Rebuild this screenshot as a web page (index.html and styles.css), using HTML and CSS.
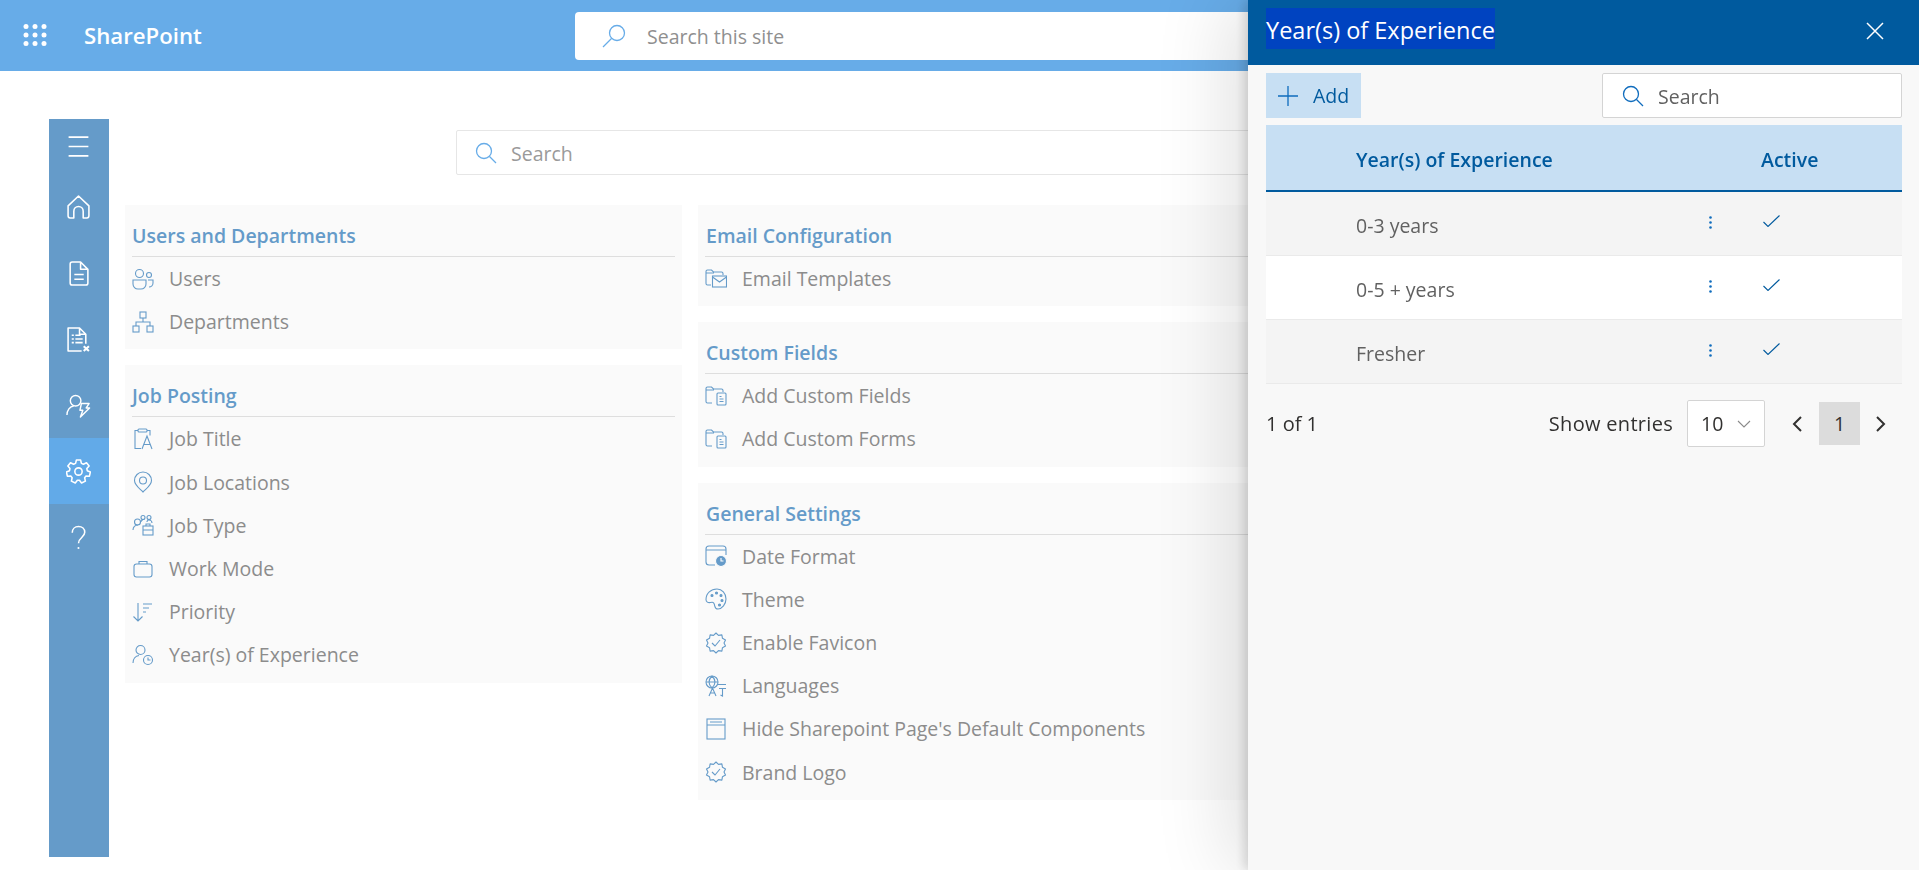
FILE: index.html
```html
<!DOCTYPE html>
<html lang="en">
<head>
    <meta charset="UTF-8">
    <title>Year(s) of Experience</title>
    <link rel="stylesheet" href="styles.css">
</head>
<body>
    <svg class="defs" width="0" height="0">
        <symbol id="badge" viewBox="0 0 22 22">
            <path d="M11 1L13.470 3.390 16.880 2.910 17.470 6.300 20.510 7.910 19 11 20.510 14.090 17.470 15.700 16.880 19.090 13.470 18.610 11 21 8.530 18.610 5.120 19.090 4.530 15.700 1.490 14.090 3 11 1.490 7.910 4.530 6.300 5.120 2.910 8.530 3.390z" fill="none" stroke="currentColor" stroke-width="1.100" stroke-linejoin="round"/>
            <path d="M7 11l3 3 5-6" fill="none" stroke="currentColor" stroke-width="1.100"/>
        </symbol>
        <symbol id="folder-doc" viewBox="0 0 22 22">
            <path d="M7 18H2.500A1.500 1.500 0 0 1 1 16.500V3.500A1.500 1.500 0 0 1 2.500 2h4l2 2h8A1.500 1.500 0 0 1 18 5.500V7M1 5h8" fill="none" stroke="currentColor" stroke-width="1.100"/>
            <rect x="12" y="8" width="9" height="12" rx="1" fill="#fafafa" stroke="currentColor" stroke-width="1.100"/>
            <path d="M14.500 11.500h2M14.500 14h4M14.500 16.500h4" fill="none" stroke="currentColor"/>
        </symbol>
        <symbol id="check" viewBox="0 0 17 12">
            <path d="M.5 7l4.500 4.500L16.500.5" fill="none" stroke="currentColor" stroke-width="1.100"/>
        </symbol>
        <symbol id="kebab" viewBox="0 0 3 13">
            <circle cx="1.500" cy="1.500" r="1.300" fill="currentColor"/>
            <circle cx="1.500" cy="6.500" r="1.300" fill="currentColor"/>
            <circle cx="1.500" cy="11.500" r="1.300" fill="currentColor"/>
        </symbol>
    </svg>

    <div class="top-bar">
        <svg class="waffle" viewBox="0 0 24 22">
            <circle cx="3" cy="2.500" r="2.500"/><circle cx="12" cy="2.500" r="2.500"/><circle cx="21" cy="2.500" r="2.500"/>
            <circle cx="3" cy="11" r="2.500"/><circle cx="12" cy="11" r="2.500"/><circle cx="21" cy="11" r="2.500"/>
            <circle cx="3" cy="19.500" r="2.500"/><circle cx="12" cy="19.500" r="2.500"/><circle cx="21" cy="19.500" r="2.500"/>
        </svg>
        <span class="brand">SharePoint</span>
        <div class="site-search">
            <svg class="site-search-icon" viewBox="0 0 24 24">
                <circle cx="15" cy="9" r="7.500"/>
                <path d="M9.500 14.500L1 23"/>
            </svg>
            <span class="nudge">Search this site</span>
        </div>
    </div>

    <div class="page">
        <div class="side-nav">
            <div class="nav-item nav-toggle">
                <svg class="nav-icon" viewBox="0 0 24 24"><path d="M2.500 3h19M2.500 12h19M2.500 21h19"/></svg>
            </div>
            <div class="nav-item">
                <svg class="nav-icon" viewBox="0 0 24 24"><path d="M2 20V10.500L12 1l10 9.500V20a2 2 0 0 1-2 2h-3.500v-6.500a4.500 4.500 0 0 0-9 0V22H4a2 2 0 0 1-2-2z"/></svg>
            </div>
            <div class="nav-item">
                <svg class="nav-icon" viewBox="0 0 24 24"><path d="M4 3a2 2 0 0 1 2-2h8l7 7v13a2 2 0 0 1-2 2H6a2 2 0 0 1-2-2zM14 1v7h7M8 13h9M8 17.500h9"/></svg>
            </div>
            <div class="nav-item">
                <svg class="nav-icon" viewBox="0 0 24 24"><path d="M19 16V7l-6-6H2v22h13M13 1v6h6M5.500 8h2M9 8h5M5.500 11.500h2M9 11.500h7M5.500 15h2M9 15h7"/><path class="nav-x" d="M17 18.500l5 4.500M22 18.500l-5 4.500"/></svg>
            </div>
            <div class="nav-item">
                <svg class="nav-icon" viewBox="0 0 26 24"><circle cx="10" cy="7" r="5.500"/><path d="M1 22c0-5 3-9 7-9.500"/><path d="M16 10h8l-3 4.500h3.500L15 24l2.500-7h-3z"/></svg>
            </div>
            <div class="nav-item nav-active">
                <svg class="nav-icon" viewBox="0 0 24 24"><circle cx="12" cy="12" r="3.500"/><path d="M10 1h4l.8 3.200 1.900.9 3-1.500 2.500 3.200-2.200 2.400.4 2 3 1.300-.9 4-3.300-.1-1.300 1.600.7 3.200-3.700 1.800-2-2.600h-2l-2 2.600-3.700-1.800.7-3.200-1.300-1.600-3.300.1-.9-4 3-1.300.4-2L1.800 6.800l2.500-3.200 3 1.500 1.900-.9z"/></svg>
            </div>
            <div class="nav-item">
                <svg class="nav-icon" viewBox="0 0 24 24"><path d="M6 7.500C6 4 8.500 1.500 12 1.500s6 2.300 6 5.500c0 5-6 5-6 10.500"/><circle class="nav-dot" cx="12" cy="22" r="1"/></svg>
            </div>
        </div>

        <div class="content">
            <div class="main-search">
                <svg class="search-icon" viewBox="0 0 22 22"><circle cx="9" cy="9" r="7.500"/><path d="M14.500 14.500L21 21"/></svg>
                <span class="nudge">Search</span>
            </div>

            <div class="columns">
                <div class="column">
                    <div class="card">
                        <div class="card-title">Users and Departments</div>
                        <div class="card-row">
                            <svg class="row-icon" viewBox="0 0 22 22"><circle cx="7.500" cy="5.500" r="4"/><circle cx="17" cy="7" r="2.500"/><path d="M1 12h13v4a5 5 0 0 1-5 5H6a5 5 0 0 1-5-5zM16 12h5v3a4 4 0 0 1-4 4"/></svg>
                            <span>Users</span>
                        </div>
                        <div class="card-row">
                            <svg class="row-icon" viewBox="0 0 22 22"><rect x="8" y="1" width="6" height="6"/><rect x="1" y="15" width="6" height="6"/><rect x="15" y="15" width="6" height="6"/><path d="M11 7v4M4 15v-4h14v4"/></svg>
                            <span>Departments</span>
                        </div>
                    </div>
                    <div class="card">
                        <div class="card-title">Job Posting</div>
                        <div class="card-row">
                            <svg class="row-icon" viewBox="0 0 22 22"><path d="M6 2.500H3v18h6M15 2.500h3v5"/><rect x="6" y="1" width="9" height="3" rx="1"/><path d="M10 21l5-13 5 13M12 16.500h6"/></svg>
                            <span>Job Title</span>
                        </div>
                        <div class="card-row">
                            <svg class="row-icon" viewBox="0 0 22 22"><path d="M11 21C7 17 2.500 14 2.500 9.500a8.500 8.500 0 0 1 17 0C19.500 14 15 17 11 21z"/><circle cx="11" cy="9.500" r="3.500"/></svg>
                            <span>Job Locations</span>
                        </div>
                        <div class="card-row">
                            <svg class="row-icon" viewBox="0 0 22 22"><circle cx="5.500" cy="8" r="3"/><circle cx="11" cy="3.500" r="2"/><circle cx="17" cy="3.500" r="2"/><path d="M1 16c0-3 2-5 5-5M9 8c0-1 1-2 2-2M15 8c0-1 1-2 2-2s3 1 3 3"/><rect x="11" y="12" width="10" height="9"/><path d="M14 12v-2h4v2M11 16h10"/></svg>
                            <span>Job Type</span>
                        </div>
                        <div class="card-row">
                            <svg class="row-icon" viewBox="0 0 22 22"><rect x="2" y="6" width="18" height="13" rx="2.500"/><path d="M7 6V3.500h8V6"/></svg>
                            <span>Work Mode</span>
                        </div>
                        <div class="card-row">
                            <svg class="row-icon" viewBox="0 0 22 22"><path d="M6 2v18M1.500 15.500L6 20l4.500-4.500M11 3h9M11 7h6M11 11h3"/></svg>
                            <span>Priority</span>
                        </div>
                        <div class="card-row">
                            <svg class="row-icon" viewBox="0 0 22 22"><circle cx="8.500" cy="6" r="4.500"/><path d="M1 19c0-4 2.500-7 6-7.500"/><circle cx="16" cy="16" r="4.500"/><path d="M16 13.500V16h2.500"/></svg>
                            <span>Year(s) of Experience</span>
                        </div>
                    </div>
                </div>

                <div class="column">
                    <div class="card">
                        <div class="card-title">Email Configuration</div>
                        <div class="card-row">
                            <svg class="row-icon" viewBox="0 0 22 22"><path d="M6 17H2.500A1.500 1.500 0 0 1 1 15.500V3.500A1.500 1.500 0 0 1 2.500 2h4l2 2h8A1.500 1.500 0 0 1 18 5.500V7M1 5h8"/><rect x="7.500" y="8" width="14" height="11"/><path d="M7.500 9l7 5 7-5"/></svg>
                            <span>Email Templates</span>
                        </div>
                    </div>
                    <div class="card">
                        <div class="card-title">Custom Fields</div>
                        <div class="card-row">
                            <svg class="row-sym"><use href="#folder-doc"/></svg>
                            <span>Add Custom Fields</span>
                        </div>
                        <div class="card-row">
                            <svg class="row-sym"><use href="#folder-doc"/></svg>
                            <span>Add Custom Forms</span>
                        </div>
                    </div>
                    <div class="card">
                        <div class="card-title">General Settings</div>
                        <div class="card-row">
                            <svg class="row-icon" viewBox="0 0 22 22"><path d="M10 20H4a3 3 0 0 1-3-3V4a3 3 0 0 1 3-3h14a3 3 0 0 1 3 3v6M1 5h20"/><circle class="icon-fill" cx="16" cy="16" r="5.500"/><path class="icon-hand" d="M16 13v3h2.500"/></svg>
                            <span>Date Format</span>
                        </div>
                        <div class="card-row">
                            <svg class="row-icon" viewBox="0 0 22 22"><path d="M12 1c5 0 9 4.500 9 10 0 5-4 10-8 10-3 0-3-2-3.500-4-.5-3-2-3-4-2.500C3 15 1 14 1 11.500 1 5 6 1 12 1z"/><circle cx="7" cy="7.500" r="1"/><circle cx="11.500" cy="5" r="1"/><circle cx="16" cy="7.500" r="1"/><circle cx="17" cy="12.500" r="1"/><circle cx="14.500" cy="17" r="1"/></svg>
                            <span>Theme</span>
                        </div>
                        <div class="card-row">
                            <svg class="row-sym"><use href="#badge"/></svg>
                            <span>Enable Favicon</span>
                        </div>
                        <div class="card-row">
                            <svg class="row-icon" viewBox="0 0 22 22"><circle cx="7" cy="7" r="6"/><path d="M1 7h12M7 1c-4 4-4 8 0 12M7 1c4 4 4 8 0 12M4 21l3.500-8 3.500 8M5.500 18h4M13 9.500h8M14 13.500h7M17.500 13.500V21l-2-1"/></svg>
                            <span>Languages</span>
                        </div>
                        <div class="card-row">
                            <svg class="row-icon" viewBox="0 0 22 22"><rect x="2" y="1" width="18" height="20"/><path d="M2 7h18M5 4h12"/></svg>
                            <span>Hide Sharepoint Page's Default Components</span>
                        </div>
                        <div class="card-row">
                            <svg class="row-sym"><use href="#badge"/></svg>
                            <span>Brand Logo</span>
                        </div>
                    </div>
                </div>
            </div>
        </div>
    </div>

    <!-- Side panel, lies over the page -->
    <div class="panel">
        <div class="panel-header">
            <span class="panel-title">Year(s) of Experience</span>
            <svg class="panel-close" viewBox="0 0 18 18"><path d="M1 1l16 16M17 1L1 17"/></svg>
        </div>
        <div class="panel-body">
            <div class="toolbar">
                <div class="add-btn">
                    <svg class="add-icon" viewBox="0 0 20 20"><path d="M10 0v20M0 10h20"/></svg>
                    <span>Add</span>
                </div>
                <div class="panel-search">
                    <svg class="panel-search-icon" viewBox="0 0 22 22"><circle cx="9" cy="9" r="7.500"/><path d="M14.500 14.500L21 21"/></svg>
                    <span class="nudge">Search</span>
                </div>
            </div>

            <div class="table-head">
                <span></span>
                <span>Year(s) of Experience</span>
                <span></span>
                <span>Active</span>
            </div>
            <div class="table-row">
                <span></span>
                <span class="row-text">0-3 years</span>
                <svg class="kebab"><use href="#kebab"/></svg>
                <svg class="check"><use href="#check"/></svg>
            </div>
            <div class="table-row">
                <span></span>
                <span class="row-text">0-5 + years</span>
                <svg class="kebab"><use href="#kebab"/></svg>
                <svg class="check"><use href="#check"/></svg>
            </div>
            <div class="table-row">
                <span></span>
                <span class="row-text">Fresher</span>
                <svg class="kebab"><use href="#kebab"/></svg>
                <svg class="check"><use href="#check"/></svg>
            </div>

            <div class="table-foot">
                <span class="foot-count">1 of 1</span>
                <span class="foot-label">Show entries</span>
                <div class="entries-select">
                    <span>10</span>
                    <svg class="select-chevron" viewBox="0 0 14 8"><path d="M1 1l6 6 6-6"/></svg>
                </div>
                <svg class="pager-arrow pager-prev" viewBox="0 0 10 16"><path d="M9 1L2 8l7 7"/></svg>
                <span class="pager-page">1</span>
                <svg class="pager-arrow pager-next" viewBox="0 0 10 16"><path d="M1 1l7 7-7 7"/></svg>
            </div>
        </div>
    </div>
</body>
</html>
```

FILE: styles.css
```css
* {
    margin: 0;
    padding: 0;
    box-sizing: border-box;
}

html, body {
    height: 100%;
    overflow: hidden;
    background-color: #fff;
    font-family: "Open Sans", "Noto Sans", sans-serif;
}

.defs {
    position: absolute;
}

/* Search placeholders sit a little low in their boxes */
.nudge {
    padding-top: 2px;
}

/* Top bar */
.top-bar {
    height: 71px;
    background-color: #67ace8;
    display: flex;
    align-items: center;
    padding-left: 23px;
}

.waffle {
    width: 24px;
    height: 22px;
    fill: #fff;
    margin-top: -2px;
}

.brand {
    width: 491px;
    margin-left: 37px;
    color: #fff;
    font-size: 22.200px;
    font-weight: 600;
}

.site-search {
    width: 800px;
    height: 48px;
    background-color: #fff;
    border-radius: 4px;
    display: flex;
    align-items: center;
    padding-left: 27px;
    color: #8f8f8f;
    font-size: 19.500px;
}

.site-search-icon {
    width: 24px;
    height: 24px;
    margin-right: 21px;
    fill: none;
    stroke: #67ace8;
    stroke-width: 1.300;
}

/* Page */
.page {
    display: flex;
    padding: 48px 0 0 49px;
}

.side-nav {
    width: 60px;
    height: 738px;
    background-color: #659bc9;
}

.nav-item {
    height: 66px;
    display: flex;
    align-items: center;
    justify-content: center;
    padding-right: 2px;
}

.nav-toggle {
    height: 55px;
}

.nav-active {
    background-color: #62aae8;
}

.nav-icon {
    width: 25px;
    height: 25px;
    fill: none;
    stroke: #fff;
    stroke-width: 1.500;
    stroke-linejoin: round;
}

.nav-x {
    stroke-width: 2;
}

.nav-dot {
    fill: #fff;
    stroke: none;
}

.content {
    flex: 1;
    padding-left: 16px;
}

.main-search {
    margin: 11px 0 0 331px;
    width: 900px;
    height: 45px;
    border: 1px solid #e6e6e6;
    border-radius: 2px;
    display: flex;
    align-items: center;
    padding-left: 18px;
    color: #9a9a9a;
    font-size: 19.500px;
}

.search-icon {
    width: 22px;
    height: 22px;
    margin-right: 14px;
    fill: none;
    stroke: #67ace8;
    stroke-width: 1.300;
}

.columns {
    display: flex;
    gap: 16px;
    margin-top: 30px;
}

.column {
    width: 557px;
    display: flex;
    flex-direction: column;
    gap: 16px;
}

.column:last-child {
    width: 600px;
}

.column:last-child .card-title {
    line-height: 35px;
    padding-left: 1px;
}

.card {
    background-color: #fafafa;
    padding: 13px 7px 6px;
}

.card-title {
    height: 39px;
    line-height: 36px;
    border-bottom: 1px solid #dedede;
    color: #659bc9;
    font-size: 19.500px;
    font-weight: 600;
}

.card-row {
    height: 43.200px;
    display: flex;
    align-items: center;
    color: #8c8c8c;
    font-size: 19.500px;
}

.row-icon, .row-sym {
    width: 22px;
    height: 22px;
    margin-right: 15px;
    flex-shrink: 0;
    color: #659bc9;
}

.row-icon {
    fill: none;
    stroke: #659bc9;
    stroke-width: 1.100;
}

.row-icon circle[r="1"] {
    fill: #659bc9;
}

.icon-fill {
    fill: #659bc9;
    stroke: #fafafa;
}

.icon-hand {
    stroke: #fff;
}

/* Side panel */
.panel {
    position: fixed;
    top: 0;
    right: 0;
    bottom: 0;
    width: 671px;
    background-color: #f8f8f8;
    box-shadow: -4px 0 10px rgba(0, 0, 0, 0.14), -20px 0 70px rgba(0, 0, 0, 0.12);
}

.panel-header {
    height: 65px;
    background-color: #005a9e;
    display: flex;
    justify-content: space-between;
    padding: 8px 35px 0 18px;
}

.panel-title {
    height: 41px;
    line-height: 44px;
    background-color: #0043c0;
    color: #fff;
    font-size: 23.500px;
}

.panel-close {
    width: 18px;
    height: 18px;
    margin-top: 14px;
    fill: none;
    stroke: #fff;
    stroke-width: 1.500;
}

.panel-body {
    padding: 8px 17px 0 18px;
}

.toolbar {
    display: flex;
    justify-content: space-between;
    margin-bottom: 7px;
}

.add-btn {
    width: 95px;
    height: 45px;
    background-color: #c7dff3;
    display: flex;
    align-items: center;
    padding-left: 12px;
    color: #005a9e;
    font-size: 19.500px;
    line-height: 40px;
}

.add-icon {
    width: 20px;
    height: 20px;
    margin-right: 15px;
    fill: none;
    stroke: #0f6cbd;
    stroke-width: 1.300;
}

.panel-search {
    width: 300px;
    height: 45px;
    background-color: #fff;
    border: 1px solid #d4d4d4;
    border-radius: 2px;
    display: flex;
    align-items: center;
    padding-left: 19px;
    color: #616161;
    font-size: 19.500px;
}

.panel-search-icon {
    width: 22px;
    height: 22px;
    margin-right: 14px;
    fill: none;
    stroke: #0f6cbd;
    stroke-width: 1.300;
}

.table-head, .table-row {
    display: grid;
    grid-template-columns: 90px 1fr 32px 176px;
    align-items: center;
}

.table-head {
    height: 67px;
    padding-top: 3px;
    background-color: #c7dff3;
    border-bottom: 2px solid #005a9e;
    color: #005a9e;
    font-size: 19.500px;
    font-weight: 600;
}

.table-head span:last-child {
    margin-left: 35px;
}

.table-row {
    height: 64px;
    background-color: #f4f4f4;
    border-bottom: 1px solid #eaeaea;
    color: #616161;
    font-size: 19.500px;
}

.table-row:nth-child(even) {
    background-color: #fff;
}

.row-text {
    padding-top: 3px;
}

.kebab {
    width: 3px;
    height: 13px;
    justify-self: center;
    color: #0f6cbd;
    margin-top: -3px;
}

.check {
    width: 17px;
    height: 12px;
    margin-left: 37px;
    color: #005a9e;
    margin-top: -6px;
}

.table-foot {
    display: flex;
    align-items: center;
    margin-top: 16px;
    color: #323130;
    font-size: 19.500px;
}

.foot-count {
    margin-right: auto;
    font-size: 20px;
}

.foot-label {
    font-size: 20px;
    font-weight: 500;
    letter-spacing: 0.3px;
}

.entries-select {
    width: 78px;
    height: 47px;
    margin-left: 14px;
    background-color: #fff;
    border: 1px solid #d4d4d4;
    border-radius: 2px;
    display: flex;
    align-items: center;
    padding-left: 13px;
}

.select-chevron {
    width: 14px;
    height: 8px;
    margin-left: 14px;
    fill: none;
    stroke: #8a8a8a;
    stroke-width: 1.100;
}

.pager-arrow {
    width: 10px;
    height: 16px;
    fill: none;
    stroke: #323130;
    stroke-width: 2;
}

.pager-prev {
    margin-left: 27px;
}

.pager-page {
    width: 41px;
    height: 43px;
    margin-left: 17px;
    background-color: #dcdcdc;
    display: flex;
    align-items: center;
    justify-content: center;
}

.pager-next {
    margin: 0 16px 0 16px;
}
```
